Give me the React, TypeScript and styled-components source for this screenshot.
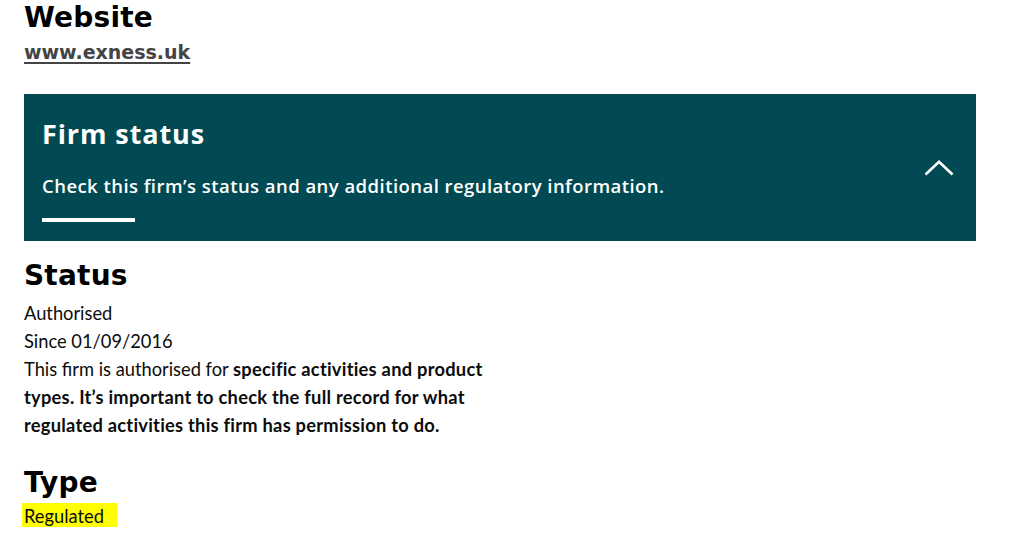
import React from "react";
import styled, { createGlobalStyle } from "styled-components";

const Global = createGlobalStyle`
  html, body { margin: 0; padding: 0; background: #fff; }
  body { font-family: Lato, "Liberation Sans", sans-serif; color: #0b0c0c; }
`;

const Page = styled.div`
  padding: 2px 48px 0 24px;
  display: flex;
  flex-direction: column;
`;

const Heading = styled.h2`
  margin: 0;
  font-family: "DejaVu Sans", Verdana, sans-serif;
  font-weight: 700;
  font-size: 28px;
  line-height: 32px;
  color: #000;
  letter-spacing: 0.2px;
`;

const SiteLink = styled.a`
  display: block;
  align-self: flex-start;
  margin-top: 7px;
  font-family: "DejaVu Sans", Verdana, sans-serif;
  font-weight: 700;
  font-size: 19px;
  line-height: 22px;
  color: #444;
  text-decoration: underline;
  text-decoration-thickness: 2px;
  text-underline-offset: 3px;
`;

const Banner = styled.section`
  margin-top: 31px;
  background: #014a53;
  color: #fff;
  height: 147px;
  box-sizing: border-box;
  padding: 0 22px 0 18px;
  display: flex;
  justify-content: space-between;
  align-items: center;
`;

const BannerText = styled.div`
  display: flex;
  flex-direction: column;
  align-self: flex-start;
  padding-top: 24px;
`;

const BannerTitle = styled.h3`
  margin: 0;
  font-family: "Open Sans", sans-serif;
  font-weight: 700;
  font-size: 27px;
  line-height: 32px;
  letter-spacing: 0.9px;
`;

const BannerSub = styled.p`
  margin: 24px 0 0;
  font-family: "Open Sans", sans-serif;
  font-weight: 600;
  font-size: 18.5px;
  line-height: 24px;
  letter-spacing: 0.45px;
`;

const Bar = styled.div`
  margin-top: 20px;
  width: 93px;
  height: 4px;
  background: #fff;
`;

const Chevron = styled.svg`
  width: 30px;
  height: 16px;
  flex-shrink: 0;
`;

const Section = styled.div<{ $mt: number }>`
  display: flex;
  flex-direction: column;
  margin-top: ${(p) => p.$mt}px;
`;

const Body = styled.div<{ $mt: number }>`
  margin-top: ${(p) => p.$mt}px;
  width: 470px;
  font-size: 18.3px;
  line-height: 28px;
  color: #0b0c0c;
`;

const Line = styled.div``;

const Strong = styled.strong`
  font-weight: 700;
  letter-spacing: 0.25px;
`;

const Highlight = styled.span`
  display: block;
  width: fit-content;
  background: #ffff00;
  padding: 2px 13px 0 2px;
  margin-left: -2px;
  line-height: 22px;
`;

export default function App() {
  return (
    <>
      <Global />
      <Page>
        <Heading>Website</Heading>
        <SiteLink href="#">www.exness.uk</SiteLink>
        <Banner>
          <BannerText>
            <BannerTitle>Firm status</BannerTitle>
            <BannerSub>Check this firm’s status and any additional regulatory information.</BannerSub>
            <Bar />
          </BannerText>
          <Chevron viewBox="0 0 30 16" fill="none">
            <path d="M1.5 14.5 L15 1.8 L28.5 14.5" stroke="#fff" strokeWidth="2.6" />
          </Chevron>
        </Banner>
        <Section $mt={19}>
          <Heading>Status</Heading>
          <Body $mt={7}>
            <Line>Authorised</Line>
            <Line>Since 01/09/2016</Line>
            <Line>
              This firm is authorised for <Strong>specific activities and product types. It’s important to check the full record for what regulated activities this firm has permission to do.</Strong>
            </Line>
          </Body>
        </Section>
        <Section $mt={28}>
          <Heading>Type</Heading>
          <Body $mt={4}>
            <Highlight>Regulated</Highlight>
          </Body>
        </Section>
      </Page>
    </>
  );
}
